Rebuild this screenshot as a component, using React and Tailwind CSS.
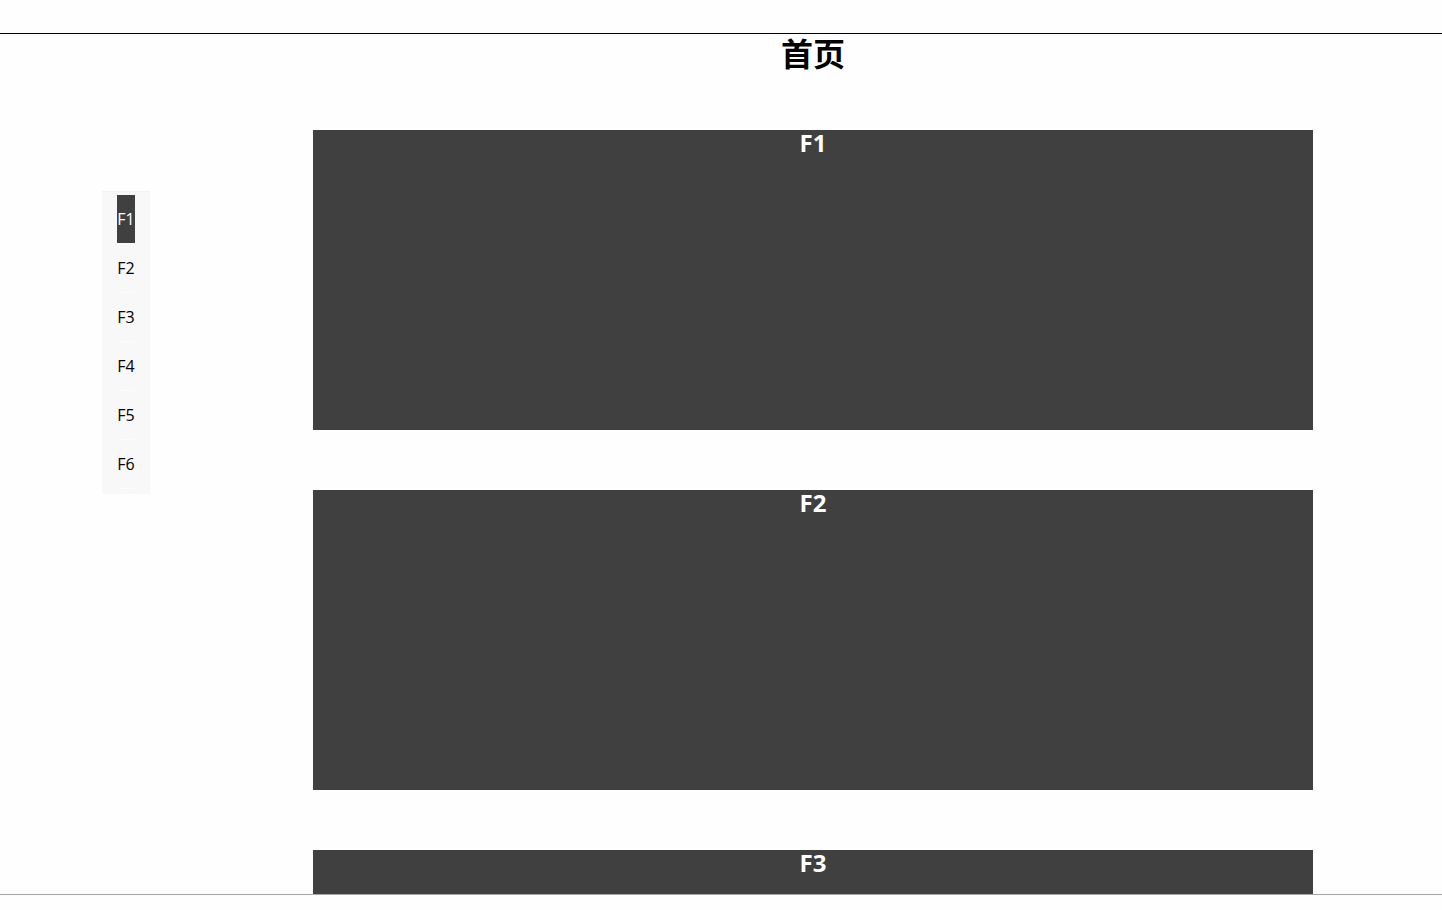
import React, { useRef, useState } from 'react';
import clsx from 'clsx';

const floors = ['F1', 'F2', 'F3', 'F4', 'F5', 'F6'];

const FloorNav = ({ current, onSelect }) => (
    <nav
        aria-label="楼层"
        className="sticky top-[157px] flex flex-col items-center w-12 pt-[3px] pb-[5px] bg-[#f8f8f8] border-t border-[#f2f2f2]"
    >
        {floors.map((floor) => (
            <a
                key={floor}
                href={`#${floor}`}
                onClick={(e) => {
                    e.preventDefault();
                    onSelect(floor);
                }}
                className="block border-b border-[#fcfcfc]"
            >
                <span
                    className={clsx(
                        'block w-[18px] h-12 leading-[48px] text-base text-center',
                        floor === current ? 'bg-[#404040] text-white' : 'text-black'
                    )}
                >
                    {floor}
                </span>
            </a>
        ))}
    </nav>
);

const App = () => {
    const [current, setCurrent] = useState('F1');
    const scrollRef = useRef(null);
    const sections = useRef({});

    const goTo = (floor) => {
        sections.current[floor]?.scrollIntoView({ behavior: 'smooth' });
    };

    // highlight the last floor whose top has passed the middle of the view
    const onScroll = () => {
        const box = scrollRef.current.getBoundingClientRect();
        const middle = box.top + box.height / 2;
        const passed = floors.filter((f) => sections.current[f].getBoundingClientRect().top < middle - 100);
        setCurrent(passed[passed.length - 1] || 'F1');
    };

    return (
        <div className="flex flex-col h-screen bg-[#fefefe] text-black font-['Open_Sans','Noto_Sans_CJK_SC',sans-serif]">
            <header className="shrink-0 h-[34px] border-b border-black" />

            <div
                ref={scrollRef}
                onScroll={onScroll}
                className="flex flex-1 min-h-0 overflow-y-auto [scrollbar-width:none]"
            >
                <aside className="shrink-0 w-[184px] pl-[102px]">
                    <FloorNav current={current} onSelect={goTo} />
                </aside>

                <main className="flex-1 min-w-0">
                    <h1 className="mb-14 text-[32px] leading-[40px] font-bold text-center">首页</h1>
                    <div className="flex flex-col gap-[60px] max-w-[1000px] mx-auto pb-[60px]">
                        {floors.map((floor) => (
                            <section
                                key={floor}
                                id={floor}
                                ref={(el) => { sections.current[floor] = el; }}
                                className="h-[300px] bg-[#404040] text-white text-center"
                            >
                                <h2 className="text-2xl leading-[26px] font-bold">{floor}</h2>
                            </section>
                        ))}
                    </div>
                </main>
            </div>

            <footer className="shrink-0 h-4 border-t border-[#a6a6a6]" />
        </div>
    );
};

export default App;
